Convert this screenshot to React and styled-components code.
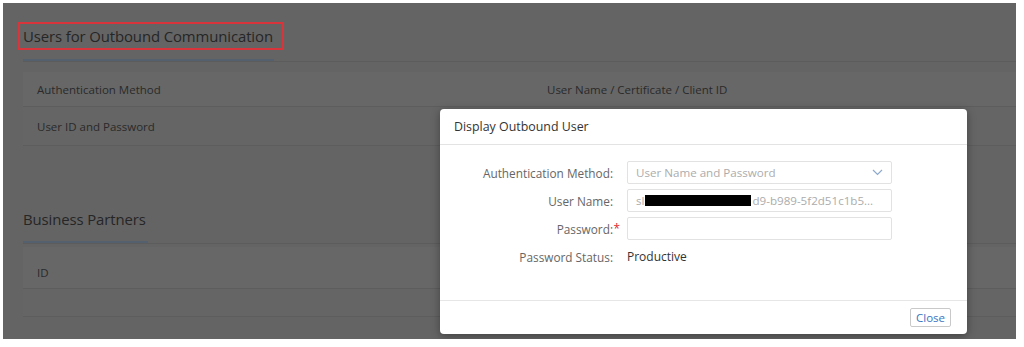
import React from "react";
import styled, { createGlobalStyle } from "styled-components";

const Global = createGlobalStyle`
  html, body { margin: 0; padding: 0; background: #fff; }
  body { font-family: "Open Sans", "Liberation Sans", Arial, sans-serif; }
`;

/* 背景页面（带遮罩） */
const Frame = styled.div`
  position: relative;
  margin: 3px 0 0 3px;
  width: 1013px;
  height: 336px;
  background: #646464;
  overflow: hidden;
`;

const Section = styled.section`
  padding-left: 20px;
`;

const SectionHead = styled.div`
  border-bottom: 1px solid #5c5c5c;
  padding-top: ${p => p.$top}px;
`;

const TitleBox = styled.div`
  display: inline-block;
  margin-left: -5px;
  padding: 0 9px 0 3px;
  height: ${p => (p.$boxed ? 24 : 28)}px;
  line-height: 24px;
  border: 2px solid ${p => (p.$boxed ? "#d8343c" : "transparent")};
  font-size: 14.9px;
  letter-spacing: -0.1px;
  color: #262626;
`;

const Underline = styled.div`
  width: ${p => p.$w}px;
  height: 2px;
  margin-top: ${p => p.$gap}px;
  background: #55606e;
`;

const Table = styled.div`
  margin-top: ${p => p.$top}px;
`;

const Row = styled.div`
  display: grid;
  grid-template-columns: 510px 1fr;
  align-items: center;
  box-sizing: border-box;
  height: ${p => p.$h}px;
  padding: ${p => p.$pt || 0}px 0 0 14px;
  background: ${p => (p.$head ? "#676767" : "#656565")};
  border-bottom: 1px solid #5d5d5d;
  font-size: 11.5px;
  color: #2a2a2a;
`;

/* 弹窗 */
const Dialog = styled.div`
  position: absolute;
  left: 437px;
  top: 106px;
  width: 527px;
  height: 225px;
  background: #fff;
  border-radius: 4px;
  box-shadow: 0 2px 8px rgba(0, 0, 0, 0.35);
  display: flex;
  flex-direction: column;
`;

const DialogHead = styled.div`
  height: 35px;
  display: flex;
  align-items: center;
  padding-left: 14px;
  border-bottom: 1px solid #e3e3e3;
  font-size: 12.4px;
  color: #333;
`;

const DialogBody = styled.div`
  flex: 1;
  padding-top: 16px;
  display: flex;
  flex-direction: column;
  gap: 5px;
`;

const FormRow = styled.div`
  display: grid;
  grid-template-columns: 173px 265px;
  column-gap: 14px;
  align-items: center;
  min-height: 23px;
  margin-top: ${p => p.$mt || 0}px;
`;

const Label = styled.div`
  text-align: right;
  font-size: 11.8px;
  color: #666;
  white-space: nowrap;
  position: relative;
`;

const Star = styled.span`
  position: absolute;
  right: -7px;
  top: -1px;
  color: #e0262e;
`;

const Field = styled.div`
  height: 23px;
  box-sizing: border-box;
  border: 1px solid #e2e2e2;
  border-radius: 2px;
  display: flex;
  align-items: center;
  padding: 0 8px;
  font-size: 11.6px;
  color: #acacac;
  white-space: nowrap;
  overflow: hidden;
`;

const Grow = styled.span`
  flex: 1;
`;

const Redact = styled.span`
  display: inline-block;
  width: 106px;
  height: 11px;
  background: #000;
  margin: 0 1px;
`;

const Value = styled.div`
  font-size: 12px;
  color: #333;
`;

const DialogFoot = styled.div`
  height: 33px;
  border-top: 1px solid #e6e6e6;
  display: flex;
  align-items: center;
  justify-content: flex-end;
  padding-right: 16px;
`;

const Button = styled.button`
  width: 41px;
  height: 19px;
  padding: 0;
  background: #fff;
  border: 1px solid #c9c9c9;
  border-radius: 2px;
  font-family: inherit;
  font-size: 11.5px;
  color: #3a74c2;
`;

const Chevron = () => (
  <svg width="11" height="7" viewBox="0 0 11 7">
    <path d="M1 1l4.5 4.5L10 1" fill="none" stroke="#8fa9cc" strokeWidth="1.2" />
  </svg>
);

export default function App() {
  return (
    <>
      <Global />
      <Frame>
        <Section>
          <SectionHead $top={19}>
            <TitleBox $boxed>Users for Outbound Communication</TitleBox>
            <Underline $w={251} $gap={9} />
          </SectionHead>
          <Table $top={10}>
            <Row $head $h={35}>
              <span>Authentication Method</span>
              <span>User Name / Certificate / Client ID</span>
            </Row>
            <Row $h={39}>
              <span>User ID and Password</span>
              <span />
            </Row>
          </Table>
        </Section>
        <Section>
          <SectionHead $top={59}>
            <TitleBox>Business Partners</TitleBox>
            <Underline $w={125} $gap={4} />
          </SectionHead>
          <Table $top={3}>
            <Row $head $h={42} $pt={10}>
              <span>ID</span>
              <span />
            </Row>
            <Row $h={28}>
              <span />
              <span />
            </Row>
          </Table>
        </Section>

        <Dialog>
          <DialogHead>Display Outbound User</DialogHead>
          <DialogBody>
            <FormRow>
              <Label>Authentication Method:</Label>
              <Field>
                <Grow>User Name and Password</Grow>
                <Chevron />
              </Field>
            </FormRow>
            <FormRow>
              <Label>User Name:</Label>
              <Field>
                sl<Redact />d9-b989-5f2d51c1b5...
              </Field>
            </FormRow>
            <FormRow>
              <Label>
                Password:<Star>*</Star>
              </Label>
              <Field />
            </FormRow>
            <FormRow>
              <Label>Password Status:</Label>
              <Value>Productive</Value>
            </FormRow>
          </DialogBody>
          <DialogFoot>
            <Button>Close</Button>
          </DialogFoot>
        </Dialog>
      </Frame>
    </>
  );
}
